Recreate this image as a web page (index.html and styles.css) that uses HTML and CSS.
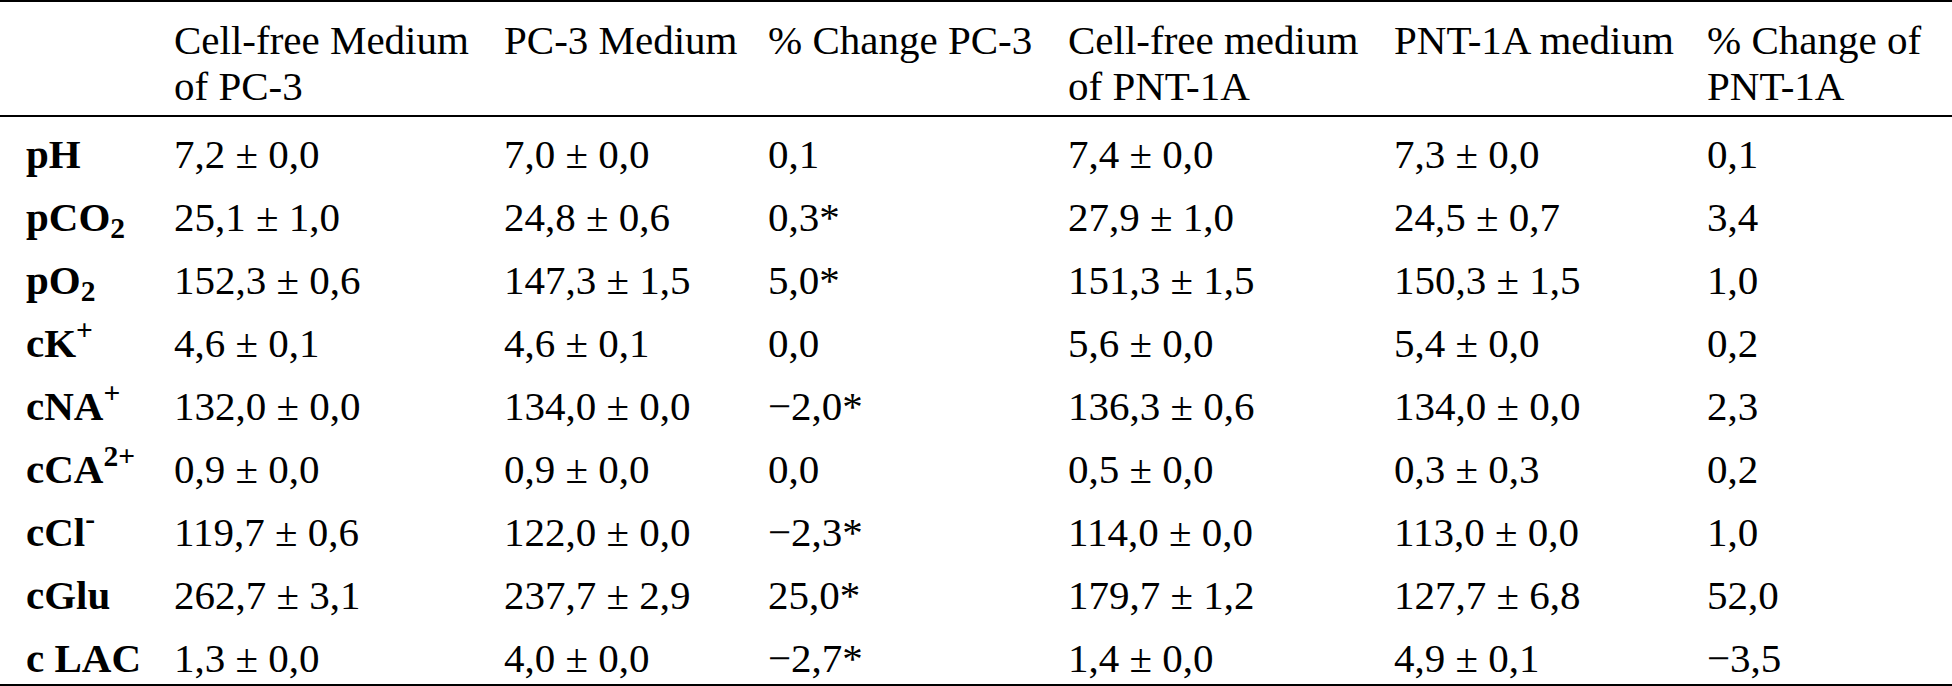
FILE: index.html
```html
<!DOCTYPE html>
<html lang="en">
<head>
<meta charset="utf-8">
<title>Blood gas analysis of media</title>
<link rel="stylesheet" href="styles.css">
</head>
<body>
<table class="data">
  <colgroup>
    <col class="c0"><col class="c1"><col class="c2"><col class="c3"><col class="c4"><col class="c5"><col class="c6">
  </colgroup>
  <thead>
    <tr>
      <th class="lbl"></th>
      <th>Cell-free Medium of PC-3</th>
      <th>PC-3 Medium</th>
      <th>% Change PC-3</th>
      <th>Cell-free medium of PNT-1A</th>
      <th>PNT-1A medium</th>
      <th>% Change of PNT-1A</th>
    </tr>
  </thead>
  <tbody>
    <tr><td class="lbl">pH</td><td>7,2 ± 0,0</td><td>7,0 ± 0,0</td><td>0,1</td><td>7,4 ± 0,0</td><td>7,3 ± 0,0</td><td>0,1</td></tr>
    <tr><td class="lbl">pCO<sub>2</sub></td><td>25,1 ± 1,0</td><td>24,8 ± 0,6</td><td>0,3*</td><td>27,9 ± 1,0</td><td>24,5 ± 0,7</td><td>3,4</td></tr>
    <tr><td class="lbl">pO<sub>2</sub></td><td>152,3 ± 0,6</td><td>147,3 ± 1,5</td><td>5,0*</td><td>151,3 ± 1,5</td><td>150,3 ± 1,5</td><td>1,0</td></tr>
    <tr><td class="lbl">cK<sup>+</sup></td><td>4,6 ± 0,1</td><td>4,6 ± 0,1</td><td>0,0</td><td>5,6 ± 0,0</td><td>5,4 ± 0,0</td><td>0,2</td></tr>
    <tr><td class="lbl">cNA<sup>+</sup></td><td>132,0 ± 0,0</td><td>134,0 ± 0,0</td><td>−2,0*</td><td>136,3 ± 0,6</td><td>134,0 ± 0,0</td><td>2,3</td></tr>
    <tr><td class="lbl">cCA<sup>2+</sup></td><td>0,9 ± 0,0</td><td>0,9 ± 0,0</td><td>0,0</td><td>0,5 ± 0,0</td><td>0,3 ± 0,3</td><td>0,2</td></tr>
    <tr><td class="lbl">cCl<sup>-</sup></td><td>119,7 ± 0,6</td><td>122,0 ± 0,0</td><td>−2,3*</td><td>114,0 ± 0,0</td><td>113,0 ± 0,0</td><td>1,0</td></tr>
    <tr><td class="lbl">cGlu</td><td>262,7 ± 3,1</td><td>237,7 ± 2,9</td><td>25,0*</td><td>179,7 ± 1,2</td><td>127,7 ± 6,8</td><td>52,0</td></tr>
    <tr><td class="lbl">c LAC</td><td>1,3 ± 0,0</td><td>4,0 ± 0,0</td><td>−2,7*</td><td>1,4 ± 0,0</td><td>4,9 ± 0,1</td><td>−3,5</td></tr>
  </tbody>
</table>
</body>
</html>
```

FILE: styles.css
```css
html, body {
  margin: 0;
  padding: 0;
  background: #ffffff;
}

body {
  font-family: "Liberation Serif", "Times New Roman", serif;
  color: #000000;
}

.data {
  width: 1952px;
  border-collapse: collapse;
  table-layout: fixed;
  font-size: 41px;
  line-height: 46px;
  border-top: 2px solid #000;
  border-bottom: 2px solid #000;
}

.c0 { width: 174px; }
.c1 { width: 330px; }
.c2 { width: 264px; }
.c3 { width: 300px; }
.c4 { width: 326px; }
.c5 { width: 313px; }
.c6 { width: 245px; }

.data th {
  font-weight: normal;
  text-align: left;
  vertical-align: top;
  padding: 15px 24px 6px 0;
  border-bottom: 2px solid #000;
}

.data td {
  text-align: left;
  vertical-align: top;
  height: 63px;
  box-sizing: border-box;
  padding: 14px 0 3px 0;
  white-space: nowrap;
}

.data .lbl {
  padding-left: 26px;
  font-weight: bold;
}

.data sub,
.data sup {
  line-height: 0;
  font-size: 0.72em;
}

.data sub {
  vertical-align: -0.24em;
}

.data sup {
  vertical-align: 0.58em;
}
```
